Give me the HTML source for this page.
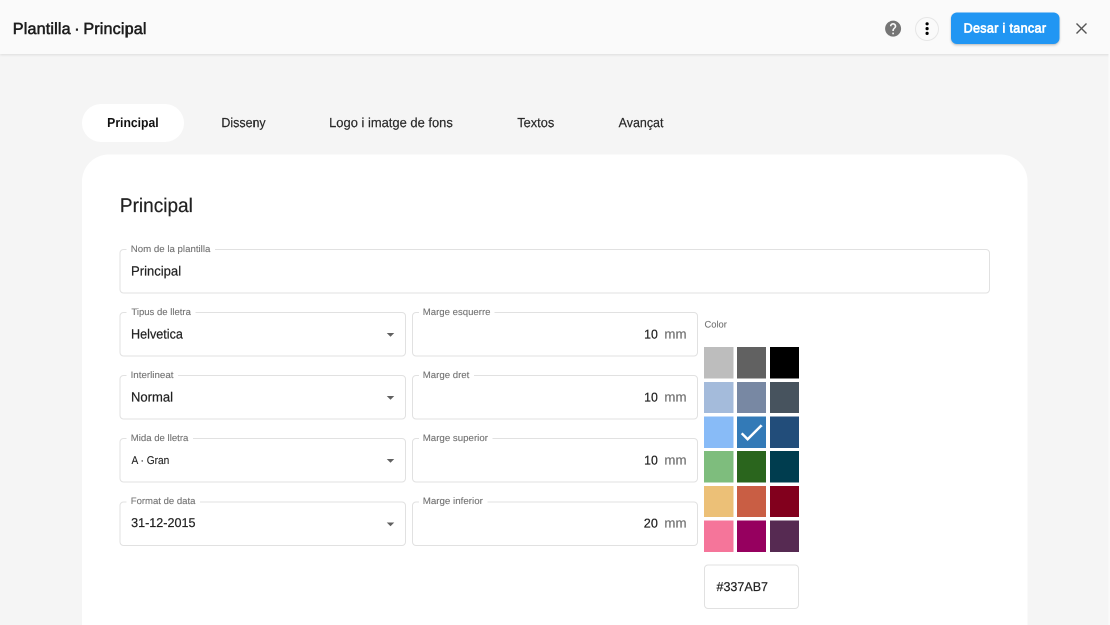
<!DOCTYPE html>
<html lang="ca">
<head>
<meta charset="utf-8">
<title>Plantilla · Principal</title>
<style>
*{box-sizing:border-box;margin:0;padding:0}
html,body{width:1110px;height:625px;overflow:hidden;background:#f5f5f5}
body{font-family:"Liberation Sans",sans-serif;color:#212121;position:relative}
#root{position:absolute;left:0;top:0;width:2220px;height:1250px;overflow:hidden;transform:scale(0.5);transform-origin:0 0;will-change:transform;background:#f5f5f5}
.t{position:absolute;left:0;top:0;white-space:nowrap;line-height:1;transform-origin:0 0;display:block;text-rendering:geometricPrecision}
#hdr{position:absolute;left:0;top:0;width:2220px;height:108px;background:#fafafa;box-shadow:0 2px 5px rgba(0,0,0,.10)}
#help{position:absolute;left:1767.4px;top:38.4px;width:38.4px;height:38.4px}
#more{position:absolute;left:1830px;top:33.6px;width:48px;height:48px;border:2px solid #e6e6e6;border-radius:50%;background:#fafafa}
#more svg{position:absolute;left:2.8px;top:2.8px}
#save{position:absolute;left:1902px;top:25px;width:216.8px;height:63px;border-radius:12px;background:#2196f3;box-shadow:0 3px 5px rgba(0,0,0,.18),0 1px 3px rgba(0,0,0,.10)}
#close{position:absolute;left:2152px;top:46px;width:22px;height:22px}
#pill{position:absolute;left:164px;top:208px;width:204px;height:76px;border-radius:38px;background:#fff}
#card{position:absolute;left:164px;top:309px;width:1891px;height:1040px;background:#fff;border-radius:54px}
.f{position:absolute;border:2px solid #e1e1e1;border-radius:8px;background:#fff}
.n{position:absolute;height:4px;background:#fff;display:block}
.ar{position:absolute}
header,nav,main{display:contents}
.sw{position:absolute}
</style>
</head>
<body>
<div id="root">
<header>
<div id="hdr"></div>
<span class="t" style="font-size:32.2px;color:#1c1c1c;transform:translate(25.59px,41px) scaleX(1.0040);letter-spacing:0.3px;-webkit-text-stroke:1.1px #1c1c1c;word-spacing:-2.2px">Plantilla · Principal</span>
<svg id="help" viewBox="0 0 24 24"><path fill="#757575" d="M15.07,11.25L14.17,12.17C13.45,12.89 13,13.5 13,15H11V14.5C11,13.39 11.45,12.39 12.17,11.67L13.41,10.41C13.78,10.05 14,9.55 14,9C14,7.89 13.1,7 12,7A2,2 0 0,0 10,9H8A4,4 0 0,1 12,5A4,4 0 0,1 16,9C16,9.88 15.64,10.67 15.07,11.25M13,19H11V17H13M12,2A10,10 0 0,0 2,12A10,10 0 0,0 12,22A10,10 0 0,0 22,12C22,6.47 17.5,2 12,2Z"/></svg>
<div id="more"><svg width="38.4" height="38.4" viewBox="0 0 24 24"><path fill="#000" d="M12,16A2,2 0 0,1 14,18A2,2 0 0,1 12,20A2,2 0 0,1 10,18A2,2 0 0,1 12,16M12,10A2,2 0 0,1 14,12A2,2 0 0,1 12,14A2,2 0 0,1 10,12A2,2 0 0,1 12,10M12,4A2,2 0 0,1 14,6A2,2 0 0,1 12,8A2,2 0 0,1 10,6A2,2 0 0,1 12,4Z"/></svg></div>
<div id="save"></div>
<span class="t" style="font-size:26.4px;color:#fff;transform:translate(1927.17px,43px) scaleX(0.9509);letter-spacing:0.7px;-webkit-text-stroke:1.4px #fff">Desar i tancar</span>
<svg id="close" viewBox="0 0 11 11"><path d="M.5.5L10.5 10.5M10.5.5L.5 10.5" stroke="#555" stroke-width="1.4" fill="none"/></svg>
</header>
<nav>
<div id="pill"></div>
<span class="t" style="font-size:26.2px;color:#111;transform:translate(214.37px,232px) scaleX(0.9308);font-weight:700">Principal</span>
<span class="t" style="font-size:26.2px;color:#2a2a2a;transform:translate(442.70px,232px) scaleX(0.9512);-webkit-text-stroke:0.4px #2a2a2a">Disseny</span>
<span class="t" style="font-size:26.2px;color:#2a2a2a;transform:translate(658.22px,232px) scaleX(0.9881);-webkit-text-stroke:0.4px #2a2a2a">Logo i imatge de fons</span>
<span class="t" style="font-size:26.2px;color:#2a2a2a;transform:translate(1034.51px,232px) scaleX(0.9772);-webkit-text-stroke:0.4px #2a2a2a">Textos</span>
<span class="t" style="font-size:26.2px;color:#2a2a2a;transform:translate(1237.24px,232px) scaleX(0.9524);-webkit-text-stroke:0.4px #2a2a2a">Avançat</span>
</nav>
<main>
<div id="card"></div>
<span class="t" style="font-size:39.6px;color:#212121;transform:translate(239.84px,392px) scaleX(0.9603);-webkit-text-stroke:0.4px #212121">Principal</span>
<div class="f" style="left:239px;top:498px;width:1741px;height:89px"></div><i class="n" style="left:253.4px;top:497px;width:176.6px"></i><span class="t" style="font-size:18.8px;color:#747474;transform:translate(261.45px,489px) scaleX(1.0310);-webkit-text-stroke:0.24px #747474">Nom de la plantilla</span><span class="t" style="font-size:26.5px;color:#212121;transform:translate(262.03px,529px) scaleX(0.9857);-webkit-text-stroke:0.4px #212121">Principal</span>
<div class="f" style="left:239px;top:624px;width:573px;height:89px"></div><i class="n" style="left:253.4px;top:623px;width:137.6px"></i><span class="t" style="font-size:18.8px;color:#747474;transform:translate(262.75px,615px) scaleX(1.0149);-webkit-text-stroke:0.24px #747474">Tipus de lletra</span><span class="t" style="font-size:26.5px;color:#212121;transform:translate(262.10px,655px) scaleX(0.9510);-webkit-text-stroke:0.4px #212121">Helvetica</span><svg class="ar" style="left:763px;top:650.6px" width="36" height="36" viewBox="0 0 24 24"><path fill="#616161" d="M7,10L12,15L17,10H7Z"/></svg>
<div class="f" style="left:823.5px;top:624px;width:572.5px;height:89px"></div><i class="n" style="left:838.2px;top:623px;width:151.2px"></i><span class="t" style="font-size:18.8px;color:#747474;transform:translate(845.47px,615px) scaleX(1.0222);-webkit-text-stroke:0.24px #747474">Marge esquerre</span><span class="t" style="font-size:25.6px;color:#212121;transform:translate(1288.32px,657px) scaleX(0.9615);-webkit-text-stroke:0.4px #212121">10</span><span class="t" style="font-size:26.5px;color:#747474;transform:translate(1328.85px,655px) scaleX(1.0012);-webkit-text-stroke:0.4px #747474">mm</span>
<div class="f" style="left:239px;top:750px;width:573px;height:89px"></div><i class="n" style="left:253.4px;top:749px;width:102.6px"></i><span class="t" style="font-size:18.8px;color:#747474;transform:translate(261.18px,741px) scaleX(1.0402);-webkit-text-stroke:0.24px #747474">Interlineat</span><span class="t" style="font-size:26.5px;color:#212121;transform:translate(262.03px,781px) scaleX(0.9835);-webkit-text-stroke:0.4px #212121">Normal</span><svg class="ar" style="left:763px;top:776.6px" width="36" height="36" viewBox="0 0 24 24"><path fill="#616161" d="M7,10L12,15L17,10H7Z"/></svg>
<div class="f" style="left:823.5px;top:750px;width:572.5px;height:89px"></div><i class="n" style="left:838.2px;top:749px;width:109.4px"></i><span class="t" style="font-size:18.8px;color:#747474;transform:translate(845.46px,741px) scaleX(1.0263);-webkit-text-stroke:0.24px #747474">Marge dret</span><span class="t" style="font-size:25.6px;color:#212121;transform:translate(1288.32px,783px) scaleX(0.9615);-webkit-text-stroke:0.4px #212121">10</span><span class="t" style="font-size:26.5px;color:#747474;transform:translate(1328.85px,781px) scaleX(1.0012);-webkit-text-stroke:0.4px #747474">mm</span>
<div class="f" style="left:239px;top:876px;width:573px;height:89px"></div><i class="n" style="left:253.4px;top:875px;width:132.6px"></i><span class="t" style="font-size:18.8px;color:#747474;transform:translate(261.47px,867px) scaleX(1.0224);-webkit-text-stroke:0.24px #747474">Mida de lletra</span><span class="t" style="font-size:22.6px;color:#212121;transform:translate(263.00px,910px) scaleX(0.8967);-webkit-text-stroke:0.2px #212121">A · Gran</span><svg class="ar" style="left:763px;top:902.6px" width="36" height="36" viewBox="0 0 24 24"><path fill="#616161" d="M7,10L12,15L17,10H7Z"/></svg>
<div class="f" style="left:823.5px;top:876px;width:572.5px;height:89px"></div><i class="n" style="left:838.2px;top:875px;width:146.4px"></i><span class="t" style="font-size:18.8px;color:#747474;transform:translate(845.45px,867px) scaleX(1.0329);-webkit-text-stroke:0.24px #747474">Marge superior</span><span class="t" style="font-size:25.6px;color:#212121;transform:translate(1288.32px,909px) scaleX(0.9615);-webkit-text-stroke:0.4px #212121">10</span><span class="t" style="font-size:26.5px;color:#747474;transform:translate(1328.85px,907px) scaleX(1.0012);-webkit-text-stroke:0.4px #747474">mm</span>
<div class="f" style="left:239px;top:1003px;width:573px;height:89px"></div><i class="n" style="left:253.4px;top:1002px;width:146.6px"></i><span class="t" style="font-size:18.8px;color:#747474;transform:translate(261.48px,993px) scaleX(1.0159);-webkit-text-stroke:0.24px #747474">Format de data</span><span class="t" style="font-size:25.6px;color:#212121;transform:translate(262.26px,1034px) scaleX(0.9826);-webkit-text-stroke:0.4px #212121">31-12-2015</span><svg class="ar" style="left:763px;top:1029.6px" width="36" height="36" viewBox="0 0 24 24"><path fill="#616161" d="M7,10L12,15L17,10H7Z"/></svg>
<div class="f" style="left:823.5px;top:1003px;width:572.5px;height:89px"></div><i class="n" style="left:838.2px;top:1002px;width:136.4px"></i><span class="t" style="font-size:18.8px;color:#747474;transform:translate(845.44px,993px) scaleX(1.0381);-webkit-text-stroke:0.24px #747474">Marge inferior</span><span class="t" style="font-size:25.6px;color:#212121;transform:translate(1287.61px,1035px) scaleX(0.9869);-webkit-text-stroke:0.4px #212121">20</span><span class="t" style="font-size:26.5px;color:#747474;transform:translate(1328.85px,1033px) scaleX(1.0012);-webkit-text-stroke:0.4px #747474">mm</span>
<span class="t" style="font-size:18.8px;color:#747474;transform:translate(1409.00px,640px) scaleX(0.9966);-webkit-text-stroke:0.24px #747474">Color</span>
<div class="sw" style="left:1408px;top:694px;width:59.4px;height:63px;background:#bdbdbd"></div>
<div class="sw" style="left:1474px;top:694px;width:58.4px;height:63px;background:#616161"></div>
<div class="sw" style="left:1540px;top:694px;width:58px;height:63px;background:#000000"></div>
<div class="sw" style="left:1408px;top:764px;width:59.4px;height:62px;background:#a4bbdb"></div>
<div class="sw" style="left:1474px;top:764px;width:58.4px;height:62px;background:#7888a3"></div>
<div class="sw" style="left:1540px;top:764px;width:58px;height:62px;background:#47535e"></div>
<div class="sw" style="left:1408px;top:833px;width:59.4px;height:63px;background:#88bbf7"></div>
<div class="sw" style="left:1474px;top:833px;width:58.4px;height:63px;background:#337ab7"><svg width="59.34" height="59.34" viewBox="0 0 24 24" style="position:absolute;left:-0.6px;top:1.6px"><path fill="#fff" d="M21,7L9,19L3.5,13.5L4.91,12.09L9,16.17L19.59,5.59L21,7Z"/></svg></div>
<div class="sw" style="left:1540px;top:833px;width:58px;height:63px;background:#224d7a"></div>
<div class="sw" style="left:1408px;top:902px;width:59.4px;height:63px;background:#7ebd7d"></div>
<div class="sw" style="left:1474px;top:902px;width:58.4px;height:63px;background:#2a651d"></div>
<div class="sw" style="left:1540px;top:902px;width:58px;height:63px;background:#003d4f"></div>
<div class="sw" style="left:1408px;top:972px;width:59.4px;height:62px;background:#ecc077"></div>
<div class="sw" style="left:1474px;top:972px;width:58.4px;height:62px;background:#c95e44"></div>
<div class="sw" style="left:1540px;top:972px;width:58px;height:62px;background:#82001d"></div>
<div class="sw" style="left:1408px;top:1041px;width:59.4px;height:63px;background:#f5759a"></div>
<div class="sw" style="left:1474px;top:1041px;width:58.4px;height:63px;background:#96005f"></div>
<div class="sw" style="left:1540px;top:1041px;width:58px;height:63px;background:#562a52"></div>
<div class="f" style="left:1408px;top:1129px;width:190px;height:89px"></div>
<span class="t" style="font-size:25.6px;color:#212121;transform:translate(1433.00px,1162px) scaleX(0.9784);-webkit-text-stroke:0.4px #212121">#337AB7</span>
</main>
<div style="position:absolute;left:2217px;top:0;width:3px;height:1250px;background:#fafafa"></div>
</div>
</body>
</html>
